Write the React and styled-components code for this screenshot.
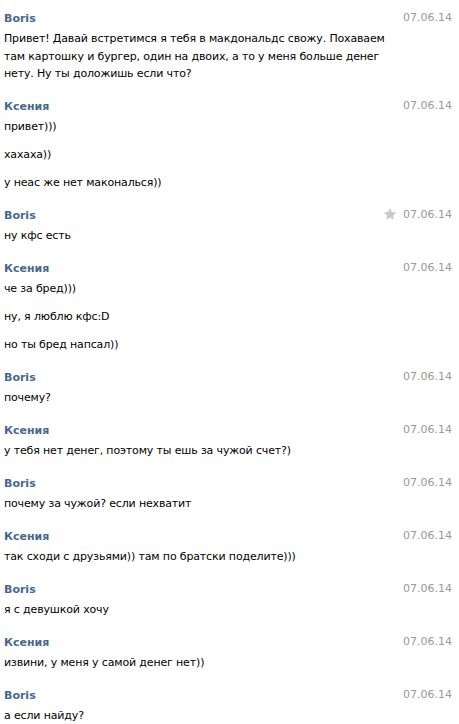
import React from "react";
import styled, { createGlobalStyle } from "styled-components";

const GlobalStyle = createGlobalStyle`
  body {
    margin: 0;
    background: #fff;
    font-family: "DejaVu Sans", Tahoma, sans-serif;
    font-size: 11px;
    color: #000;
  }
`;

const dialog = [
  {
    author: "Boris",
    date: "07.06.14",
    messages: [
      "Привет! Давай встретимся я тебя в макдональдс свожу. Похаваем там картошку и бургер, один на двоих, а то у меня больше денег нету. Ну ты доложишь если что?",
    ],
  },
  {
    author: "Ксения",
    date: "07.06.14",
    messages: ["привет)))", "хахаха))", "у неас же нет макональся))"],
  },
  { author: "Boris", date: "07.06.14", starred: true, messages: ["ну кфс есть"] },
  {
    author: "Ксения",
    date: "07.06.14",
    messages: ["че за бред)))", "ну, я люблю кфс:D", "но ты бред напсал))"],
  },
  { author: "Boris", date: "07.06.14", messages: ["почему?"] },
  {
    author: "Ксения",
    date: "07.06.14",
    messages: ["у тебя нет денег, поэтому ты ешь за чужой счет?)"],
  },
  { author: "Boris", date: "07.06.14", messages: ["почему за чужой? если нехватит"] },
  {
    author: "Ксения",
    date: "07.06.14",
    messages: ["так сходи с друзьями)) там по братски поделите)))"],
  },
  { author: "Boris", date: "07.06.14", messages: ["я с девушкой хочу"] },
  {
    author: "Ксения",
    date: "07.06.14",
    messages: ["извини, у меня у самой денег нет))"],
  },
  { author: "Boris", date: "07.06.14", messages: ["а если найду?"] },
];

const Chat = () => {
  return (
    <>
      <GlobalStyle />
      <Wrapper>
        {dialog.map((block, i) => (
          <Block key={i}>
            <Header>
              <Author>{block.author}</Author>
              <Meta>
                {block.starred && (
                  <Star viewBox="0 0 24 24">
                    <polygon points="12,1.5 15.1,8.6 22.8,9.3 17,14.4 18.7,22 12,18 5.3,22 7,14.4 1.2,9.3 8.9,8.6" />
                  </Star>
                )}
                <DateText>{block.date}</DateText>
              </Meta>
            </Header>
            {block.messages.map((text, j) => (
              <Message key={j}>{text}</Message>
            ))}
          </Block>
        ))}
      </Wrapper>
    </>
  );
};

const Wrapper = styled.div`
  width: 459px;
  padding: 2px 4px 0 4px;
  box-sizing: border-box;
`;

const Block = styled.div`
  padding-top: 8px;
`;

const Header = styled.div`
  display: flex;
  justify-content: space-between;
  align-items: center;
  height: 17px;
`;

const Author = styled.span`
  font-weight: bold;
  color: #45688e;
`;

const Meta = styled.div`
  display: flex;
  align-items: center;
  gap: 6px;
  padding-right: 3px;
  margin-top: -3px;
`;

const Star = styled.svg`
  width: 14px;
  height: 14px;
  fill: #c9c9c9;
`;

const DateText = styled.span`
  color: #999;
`;

const Message = styled.div`
  padding: 3px 0 7.5px;
  line-height: 17.5px;
  letter-spacing: -0.15px;
  max-width: 400px;
`;

export default Chat;
